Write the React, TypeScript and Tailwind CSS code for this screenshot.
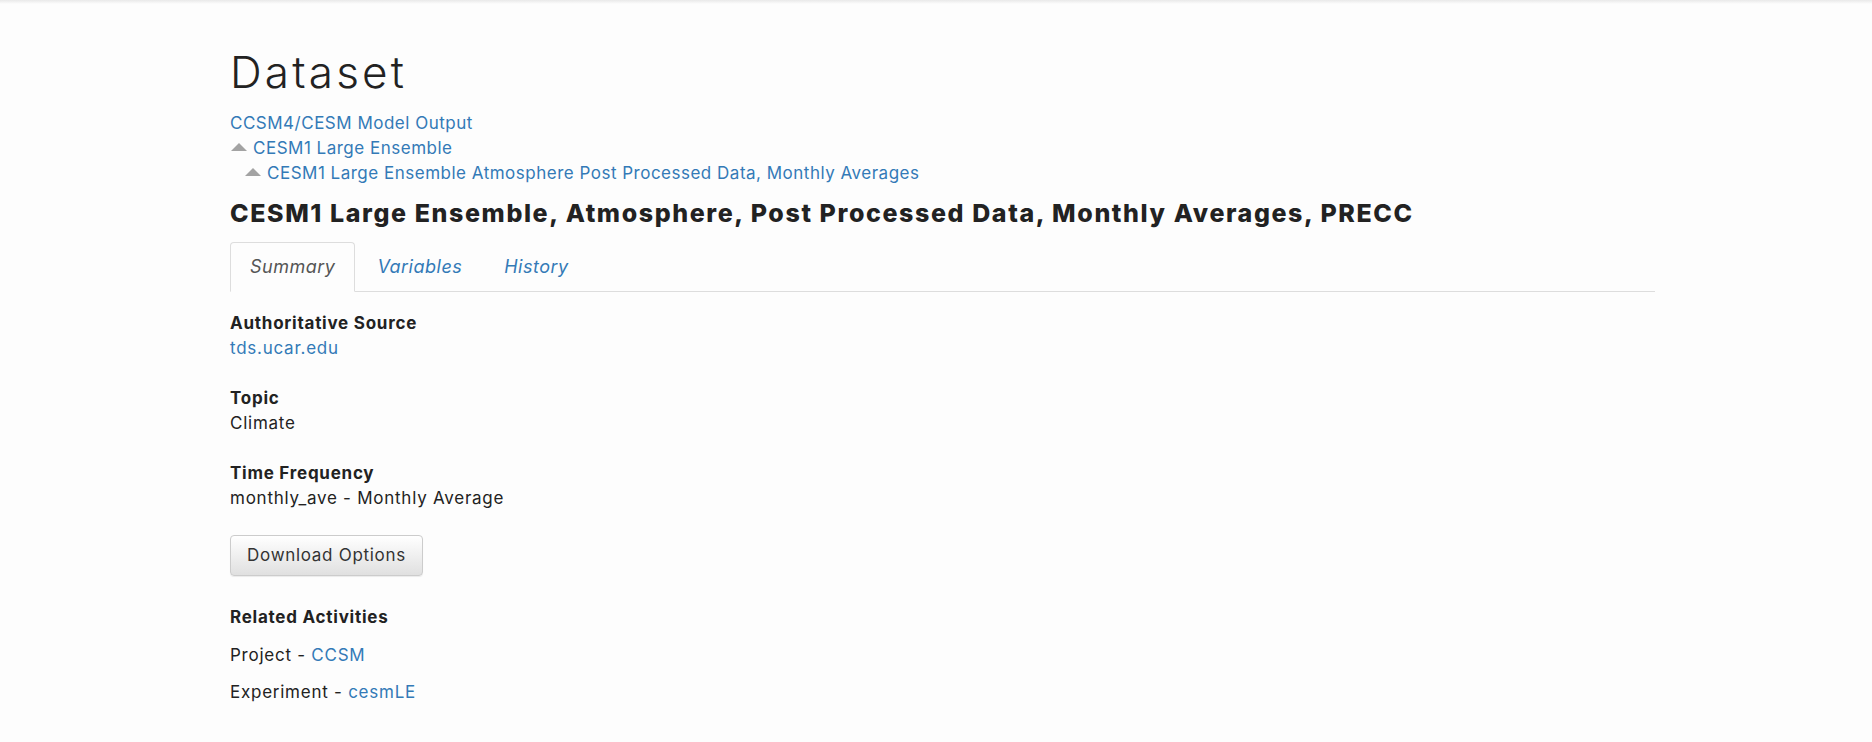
import React from "react";

function Tri() {
  return (
    <svg width="16" height="8" viewBox="0 0 16 8" className="inline-block mr-[6px] mb-[5px]">
      <polygon points="0,8 8,0 16,8" fill="#a3a3a3" />
    </svg>
  );
}

export default function App() {
  return (
    <div className="min-h-screen bg-[#fdfdfd] font-['Inter',sans-serif] text-[#222]">
      <div className="h-[4px] bg-gradient-to-b from-[#e9e9e9] to-[#fdfdfd]" />
      <div className="ml-[230px] w-[1425px] pb-[40px]">
        <h1 className="mt-[44px] text-[44px] leading-[48px] font-light tracking-[3.2px] text-[#222]">Dataset</h1>
        <div className="mt-[15px] text-[17px] leading-[25px] tracking-[0.5px] text-[#337ab7]">
          <div>CCSM4/CESM Model Output</div>
          <div className="ml-[1px]">
            <Tri />
            CESM1 Large Ensemble
          </div>
          <div className="ml-[15px]">
            <Tri />
            CESM1 Large Ensemble Atmosphere Post Processed Data, Monthly Averages
          </div>
        </div>
        <h2 className="mt-[12px] text-[25px] leading-[30px] font-extrabold tracking-[1.6px] text-[#222]">
          CESM1 Large Ensemble, Atmosphere, Post Processed Data, Monthly Averages, PRECC
        </h2>
        <ul className="mt-[14px] flex border-b border-[#ddd] text-[18px] tracking-[0.5px] italic">
          <li className="-mb-px mr-[2px]">
            <span className="block rounded-t-[4px] border border-[#ddd] border-b-transparent bg-[#fdfdfd] px-[19px] py-[12px] leading-[24px] text-[#555]">
              Summary
            </span>
          </li>
          <li className="-mb-px mr-[2px]">
            <span className="block rounded-t-[4px] border border-transparent px-[19px] py-[12px] leading-[24px] text-[#337ab7]">
              Variables
            </span>
          </li>
          <li className="-mb-px mr-[2px]">
            <span className="block rounded-t-[4px] border border-transparent px-[19px] py-[12px] leading-[24px] text-[#337ab7]">
              History
            </span>
          </li>
        </ul>
        <div className="mt-[19px] text-[17px] leading-[25px] tracking-[0.75px]">
          <div>
            <div className="font-bold tracking-[0.75px]">Authoritative Source</div>
            <div className="text-[#337ab7]">tds.ucar.edu</div>
          </div>
          <div className="mt-[25px]">
            <div className="font-bold tracking-[0.75px]">Topic</div>
            <div>Climate</div>
          </div>
          <div className="mt-[25px]">
            <div className="font-bold tracking-[0.75px]">Time Frequency</div>
            <div>monthly_ave - Monthly Average</div>
          </div>
          <button className="mt-[24px] h-[41px] w-[193px] rounded-[4px] border border-[#ccc] bg-gradient-to-b from-white to-[#e0e0e0] text-[17px] tracking-[0.7px] text-[#333] shadow-[inset_0_1px_0_rgba(255,255,255,0.15),0_1px_1px_rgba(0,0,0,0.075)]">
            Download Options
          </button>
          <div className="mt-[29px] font-bold tracking-[0.75px]">Related Activities</div>
          <div className="mt-[13px]">
            Project - <span className="text-[#337ab7]">CCSM</span>
          </div>
          <div className="mt-[12px]">
            Experiment - <span className="text-[#337ab7]">cesmLE</span>
          </div>
        </div>
      </div>
    </div>
  );
}
